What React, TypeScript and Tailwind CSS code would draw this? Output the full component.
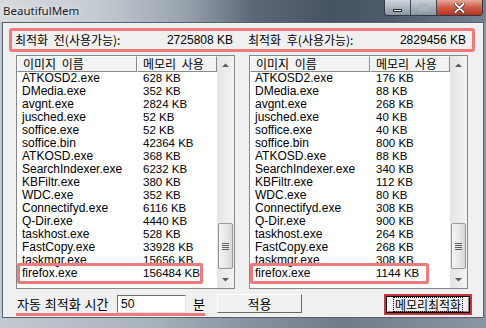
import React from "react";

const names = [
  "ATKOSD2.exe",
  "DMedia.exe",
  "avgnt.exe",
  "jusched.exe",
  "soffice.exe",
  "soffice.bin",
  "ATKOSD.exe",
  "SearchIndexer.exe",
  "KBFiltr.exe",
  "WDC.exe",
  "Connectifyd.exe",
  "Q-Dir.exe",
  "taskhost.exe",
  "FastCopy.exe",
  "taskmgr.exe",
  "firefox.exe",
];

const before = ["628", "352", "2824", "52", "52", "42364", "368", "6232", "380", "352", "6116", "4440", "528", "33928", "15656", "156484"];
const after = ["176", "88", "268", "40", "40", "800", "88", "340", "112", "80", "308", "900", "264", "268", "308", "1144"];

const latin = "font-['Liberation_Sans','Noto_Sans_CJK_KR',sans-serif]";
const korean = "font-['Noto_Sans_CJK_KR','Liberation_Sans',sans-serif] [word-spacing:3px]";

const HeaderCell = ({ label, w }: { label: string; w: string }) => (
  <div
    className={`${w} h-[16px] border-t border-l border-white border-r border-b border-r-[#8a8a8a] border-b-[#8a8a8a] bg-[#f3f3f3] pl-[5px] text-[12px] leading-[14px] text-black ${korean}`}
  >
    {label}
  </div>
);

const Scrollbar = () => (
  <div className="flex h-full w-[17px] flex-col bg-gradient-to-r from-[#e4e4e4] to-[#f3f3f3]">
    <div className="flex h-[17px] items-center justify-center">
      <svg width="7" height="4" viewBox="0 0 7 4">
        <path d="M0 4L3.5 0.5L7 4Z" fill="#5a5a5a" />
      </svg>
    </div>
    <div className="flex flex-1 flex-col justify-end px-[1px] pb-[2px]">
      <div className="flex h-[46px] items-center justify-center rounded-[2px] border border-[#979797] bg-gradient-to-r from-[#f4f4f4] via-[#e9e9e9] to-[#d8d8d8]">
        <div className="flex flex-col gap-[1px]">
          <div className="h-px w-[7px] bg-[#606060]" />
          <div className="h-px w-[7px] bg-[#606060]" />
          <div className="h-px w-[7px] bg-[#606060]" />
          <div className="h-px w-[7px] bg-[#606060]" />
        </div>
      </div>
    </div>
    <div className="flex h-[17px] items-center justify-center">
      <svg width="7" height="4" viewBox="0 0 7 4">
        <path d="M0 0L3.5 3.5L7 0Z" fill="#5a5a5a" />
      </svg>
    </div>
  </div>
);

const ProcList = ({ mem, hl }: { mem: string[]; hl: string }) => (
  <div className="relative flex h-[234px] w-[219px] border border-[#828790] bg-white">
    <div className="flex w-[200px] flex-col">
      <div className="flex">
        <HeaderCell label="이미지 이름" w="w-[120px]" />
        <HeaderCell label="메모리 사용" w="w-[80px]" />
      </div>
      {names.map((n, i) => (
        <div key={n} className={`flex h-[13px] leading-[13px] text-black ${latin}`}>
          <span className="w-[120px] pl-[5px] text-[12px]">{n}</span>
          <span className="pl-[6px] text-[11.5px]">{mem[i]} KB</span>
        </div>
      ))}
    </div>
    <Scrollbar />
    <div className={`absolute left-0 top-[207px] h-[21px] ${hl} rounded-[2px] border-[3px] border-[#ee7b7b]`} />
  </div>
);

const CaptionButtons = () => (
  <div className="mr-[3px] flex h-[16px] overflow-hidden rounded-b-[4px] border border-t-0 border-[#2f3a46]">
    <div className="flex w-[26px] items-end justify-center border-r border-[#3b4754] bg-gradient-to-b from-[#cfd5db] to-[#8c97a3] pb-[3px]">
      <div className="h-[3px] w-[9px] border border-[#2c2c2c] bg-white" />
    </div>
    <div className="flex w-[26px] items-center justify-center border-r border-[#3b4754] bg-gradient-to-b from-[#c9cfd6] to-[#8a95a1]">
      <div className="h-[7px] w-[9px] border-2 border-[#a9b1ba]" />
    </div>
    <div className="flex w-[45px] items-center justify-center bg-gradient-to-b from-[#e6a999] via-[#cf5a45] to-[#b8321f]">
      <svg width="11" height="10" viewBox="0 0 11 10">
        <path d="M1.5 1L9.5 9M9.5 1L1.5 9" stroke="#3a1a14" strokeWidth="3.4" strokeLinecap="round" />
        <path d="M1.5 1L9.5 9M9.5 1L1.5 9" stroke="#ffffff" strokeWidth="2" strokeLinecap="round" />
      </svg>
    </div>
  </div>
);

export default function App() {
  return (
    <div className="h-[328px] w-[486px] overflow-hidden bg-[linear-gradient(90deg,#c2cad1_0%,#aab4be_30%,#8894a0_50%,#6f7b88_70%,#8a96a2_100%)]">
      <div className="flex h-[22px] items-start justify-between bg-[linear-gradient(90deg,#d6dadd_0%,#c4cbd2_20%,#98a3ae_38%,#5c6876_52%,#465362_68%,#4e5b69_80%,#75818e_100%)]">
        <div className="pl-[3px] pt-[3px] text-[11.5px] leading-[15px] text-[#1c1c1c] [text-shadow:0_0_6px_#ffffff] font-['Noto_Sans',sans-serif]">
          BeautifulMem
        </div>
        <CaptionButtons />
      </div>

      <div className="ml-[2px] flex h-[296px] w-[482px] flex-col border border-[#55616e] bg-[#f0f0f0]">
        <div className="ml-[6px] mt-[5px] flex h-[24px] w-[466px] items-center rounded-[3px] border-[3px] border-[#ee7b7b] pl-[3px] text-[12px] text-black">
          <div className="flex w-[218px] items-center justify-between">
            <span className={korean}>최적화 전(사용가능):</span>
            <span className={latin}>2725808 KB</span>
          </div>
          <div className="ml-[15px] flex w-[218px] items-center justify-between">
            <span className={korean}>최적화 후(사용가능):</span>
            <span className={latin}>2829456 KB</span>
          </div>
        </div>

        <div className="ml-[13px] mt-[3px] flex gap-[14px]">
          <ProcList mem={before} hl="w-[186px]" />
          <ProcList mem={after} hl="w-[179px]" />
        </div>

        <div className="mt-[5px] flex items-start">
          <div className="ml-[13px] flex h-[22px] items-start border-b-[3px] border-[#ee7b7b] pl-[1px] text-[13px] text-black font-['Noto_Sans_CJK_KR','Liberation_Sans',sans-serif]">
            <span className="w-[100px] pt-[1px] leading-[17px] [word-spacing:1px]">자동 최적화 시간</span>
            <div className={`mt-[1px] h-[18px] w-[69px] border border-t-[#6d6d6d] border-l-[#6d6d6d] border-b-[#e3e3e3] border-r-[#e3e3e3] bg-white pl-[3px] text-[12px] leading-[16px] ${latin}`}>
              50
            </div>
            <span className="ml-[7px] pt-[1px] leading-[17px]">분</span>
          </div>
          <div className={`ml-[12px] flex h-[19px] w-[85px] items-center justify-center border border-t-white border-l-white border-b-[#696969] border-r-[#696969] bg-[#f0f0f0] text-[13px] text-black ${korean}`}>
            적용
          </div>
          <div className="ml-auto mr-[11px] h-[21px] w-[88px] border-2 border-[#c4373a]">
            <div className="h-full w-full border border-black">
              <div className="flex h-full w-full items-center justify-center border border-t-white border-l-white border-b-[#8a8a8a] border-r-[#8a8a8a] bg-[#f0f0f0]">
                <span className={`border border-dotted border-black px-[1px] text-[12px] leading-[13px] text-black ${korean}`}>
                  메모리최적화
                </span>
              </div>
            </div>
          </div>
        </div>
      </div>
    </div>
  );
}
